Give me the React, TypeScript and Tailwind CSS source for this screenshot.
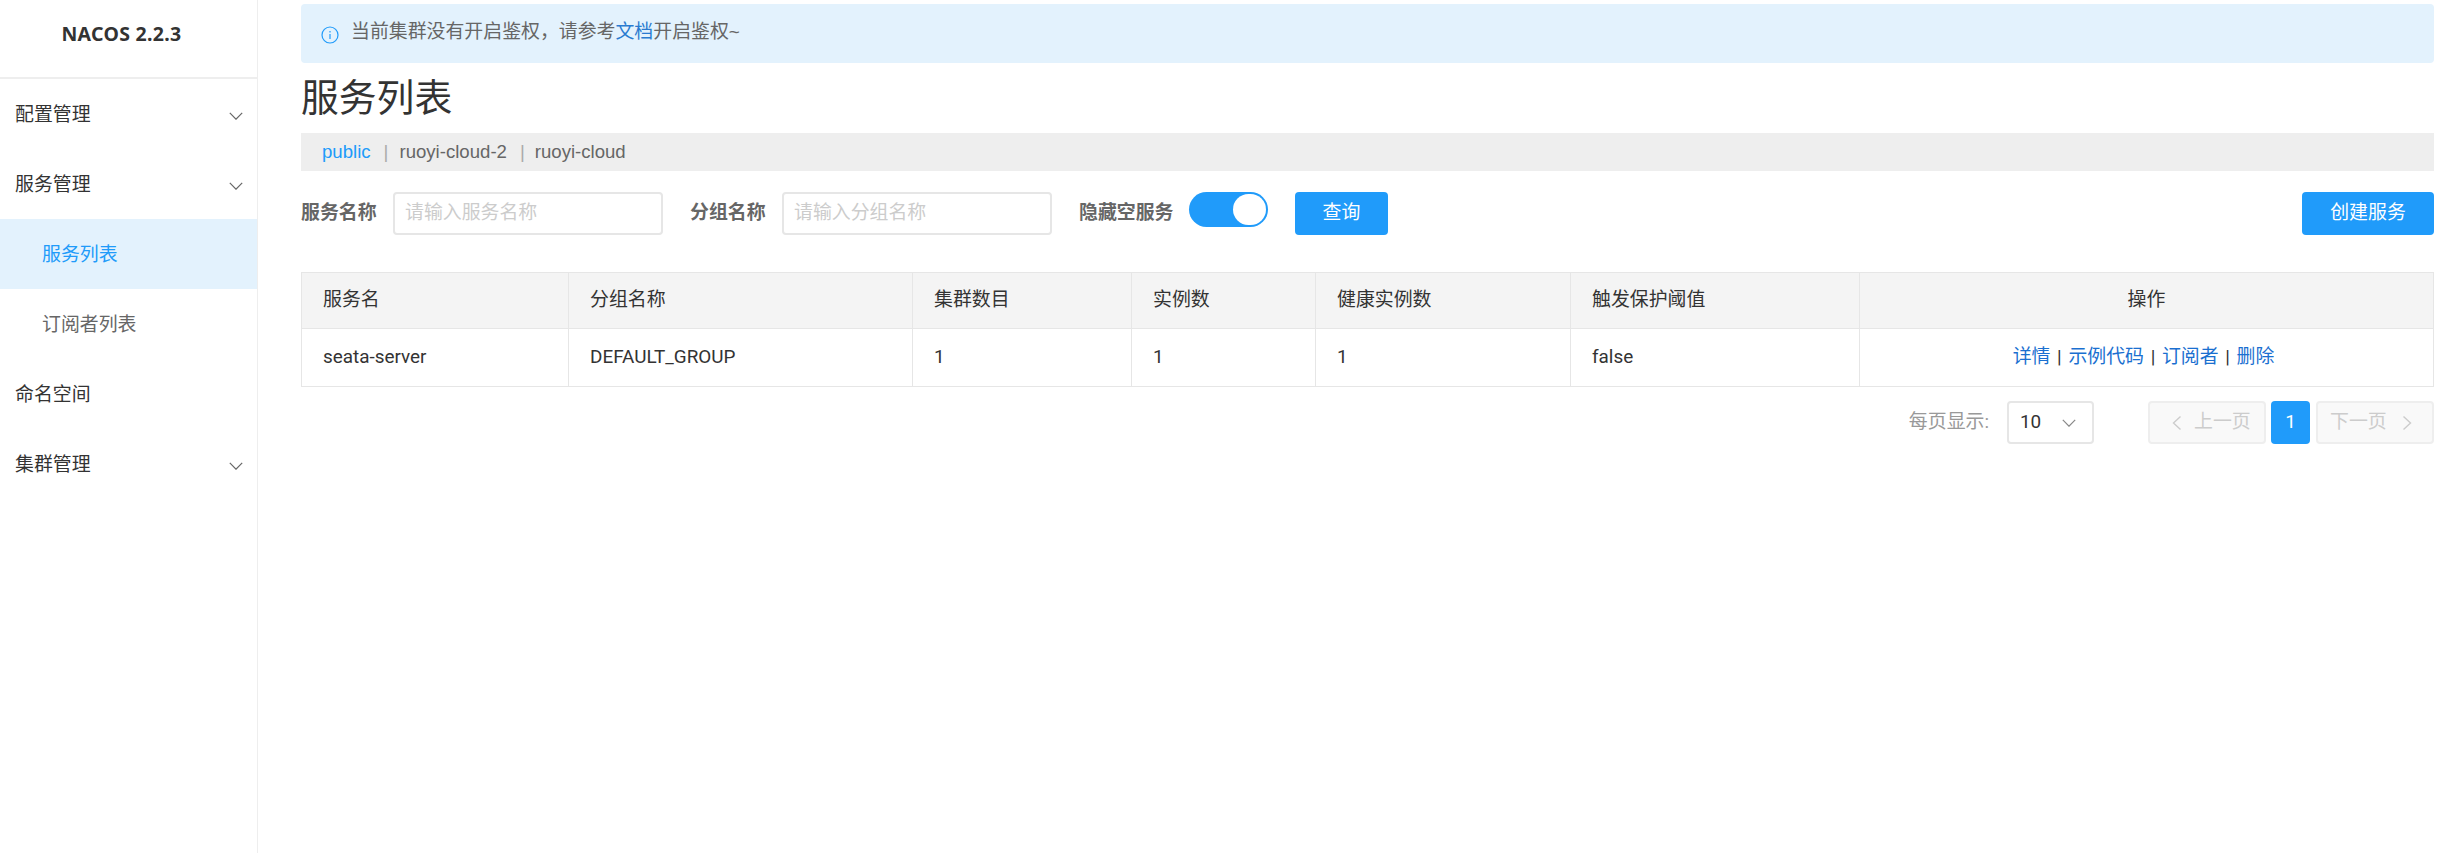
import React from "react";

const font = "font-['Liberation_Sans','Noto_Sans_CJK_SC',sans-serif]";
const roboto = "font-['Roboto','Noto_Sans_CJK_SC',sans-serif]";

function Chevron({ color = "#666666", w = 14, h = 8 }: { color?: string; w?: number; h?: number }) {
  return (
    <svg width={w} height={h} viewBox="0 0 14 8" fill="none" stroke={color} strokeWidth="1.2">
      <path d="M0.8 0.8 L7 7.2 L13.2 0.8" />
    </svg>
  );
}

function Side({ dir }: { dir: "l" | "r" }) {
  return (
    <svg width="10" height="16" viewBox="0 0 10 16" fill="none" stroke="#cccccc" strokeWidth="1.4">
      <path d={dir === "l" ? "M8.5 1.5 L1.5 8 L8.5 14.5" : "M1.5 1.5 L8.5 8 L1.5 14.5"} />
    </svg>
  );
}

function MenuItem({ label, chevron, active, sub }: { label: string; chevron?: boolean; active?: boolean; sub?: boolean }) {
  return (
    <div
      className={`h-[70px] flex items-center justify-between pr-[14px] pt-[3px] text-[18.9px] ${sub ? "pl-[42px]" : "pl-[15px]"} ${
        active ? "bg-[#e3f2fd] text-[#209bfa]" : sub ? "text-[#666666]" : "text-[#333333]"
      }`}
    >
      <span>{label}</span>
      {chevron && <Chevron />}
    </div>
  );
}

const cell = "border border-[#e6e6e6] text-[18.9px] text-[#333333]";
const th = `h-[56px] px-[21px] font-normal ${cell}`;
const td = `h-[58px] ${cell}`;

function Field({ label, placeholder }: { label: string; placeholder: string }) {
  return (
    <div className="flex items-center gap-[16px]">
      <span className="w-[76px] whitespace-nowrap text-[18.9px] font-bold text-[#666666]">{label}</span>
      <div className="w-[270px] h-[43px] border-2 border-[#e6e6e6] rounded-[4px] flex items-center px-[10px] text-[18.9px] text-[#cccccc]">
        {placeholder}
      </div>
    </div>
  );
}

export default function App() {
  return (
    <div className={`${font} flex w-[2437px] h-[853px] bg-white overflow-hidden`}>
      <aside className="w-[258px] shrink-0 border-r border-[#eeeeee] h-full">
        <div className="h-[79px] border-b-2 border-[#eeeeee] flex items-center justify-center pb-[10px] pr-[14px] font-['Noto_Sans',sans-serif] text-[19.5px] font-bold text-[#333333] tracking-[0.3px]">
          NACOS 2.2.3
        </div>
        <MenuItem label="配置管理" chevron />
        <MenuItem label="服务管理" chevron />
        <MenuItem label="服务列表" sub active />
        <MenuItem label="订阅者列表" sub />
        <MenuItem label="命名空间" />
        <MenuItem label="集群管理" chevron />
      </aside>
      <main className="flex-1 pl-[43px] pr-[3px] pt-[4px] min-w-0">
        <div className="h-[59px] bg-[#e3f2fd] rounded-[4px] flex items-center pl-[20px] pb-[2px] text-[18.9px] text-[#666666]">
          <svg width="18" height="18" viewBox="0 0 18 18" fill="none" stroke="#209bfa" strokeWidth="1.2" className="mr-[12px] mt-[4px]">
            <circle cx="9" cy="9" r="8" />
            <path d="M9 5v1.5M9 8v5" />
          </svg>
          <span>
            当前集群没有开启鉴权，请参考<span className="text-[#2a7bd0]">文档</span>开启鉴权~
          </span>
        </div>
        <h1 className="h-[70px] flex items-center text-[37.8px] font-normal text-[#333333]">服务列表</h1>
        <div className="h-[38px] bg-[#eeeeee] flex items-center pl-[21px] text-[18.6px] text-[#666666]">
          <span className="text-[#209bfa]">public</span>
          <span className="ml-[13px] mr-[11px] text-[#aaaaaa]">|</span>
          <span>ruoyi-cloud-2</span>
          <span className="ml-[13px] mr-[10px] text-[#aaaaaa]">|</span>
          <span>ruoyi-cloud</span>
        </div>
        <div className="flex items-start justify-between mt-[21px]">
          <div className="flex items-start">
            <div className="mr-[27px]">
              <Field label="服务名称" placeholder="请输入服务名称" />
            </div>
            <div className="mr-[27px]">
              <Field label="分组名称" placeholder="请输入分组名称" />
            </div>
            <span className="w-[95px] whitespace-nowrap h-[43px] flex items-center text-[18.9px] font-bold text-[#666666]">隐藏空服务</span>
            <div className="ml-[15px] w-[79px] h-[35px] rounded-full bg-[#209bfa] flex items-center justify-end pr-[2px]">
              <div className="w-[33px] h-[31px] rounded-full bg-white" />
            </div>
            <button className="ml-[27px] w-[93px] h-[43px] bg-[#209bfa] text-white rounded-[4px] text-[18.9px]">查询</button>
          </div>
          <button className="w-[132px] h-[43px] bg-[#209bfa] text-white rounded-[4px] text-[18.9px]">创建服务</button>
        </div>
        <table className={`${roboto} w-full mt-[37px] border-collapse table-fixed text-left`}>
          <colgroup>
            <col className="w-[267px]" />
            <col className="w-[344px]" />
            <col className="w-[219px]" />
            <col className="w-[184px]" />
            <col className="w-[255px]" />
            <col className="w-[289px]" />
            <col />
          </colgroup>
          <thead>
            <tr className="bg-[#f4f4f4]">
              <th className={`${th} text-left`}>服务名</th>
              <th className={`${th} text-left`}>分组名称</th>
              <th className={`${th} text-left`}>集群数目</th>
              <th className={`${th} text-left`}>实例数</th>
              <th className={`${th} text-left`}>健康实例数</th>
              <th className={`${th} text-left`}>触发保护阈值</th>
              <th className={`${th} text-center`}>操作</th>
            </tr>
          </thead>
          <tbody>
            <tr>
              <td className={`${td} px-[21px]`}>seata-server</td>
              <td className={`${td} px-[21px]`}>DEFAULT_GROUP</td>
              <td className={`${td} px-[21px]`}>1</td>
              <td className={`${td} px-[21px]`}>1</td>
              <td className={`${td} px-[21px]`}>1</td>
              <td className={`${td} px-[21px]`}>false</td>
              <td className={`${td} pl-[21px] pr-[27px] text-center [word-spacing:2px]`}>
                <span className="text-[#1a6fd0]">详情</span> | <span className="text-[#1a6fd0]">示例代码</span> | <span className="text-[#1a6fd0]">订阅者</span> | <span className="text-[#1a6fd0]">删除</span>
              </td>
            </tr>
          </tbody>
        </table>
        <div className={`${roboto} flex items-center justify-end mt-[14px] text-[18.9px]`}>
          <span className="text-[#999999] mr-[18px]">每页显示:</span>
          <div className="w-[87px] h-[43px] border-2 border-[#e6e6e6] rounded-[4px] flex items-center justify-between pl-[11px] pr-[16px] text-[#333333]">
            <span>10</span>
            <Chevron color="#888888" />
          </div>
          <div className="ml-[54px] w-[118px] h-[43px] bg-[#f9f9f9] border-2 border-[#eeeeee] rounded-[4px] flex items-center pl-[22px] gap-[12px] text-[#cccccc]">
            <Side dir="l" />
            <span>上一页</span>
          </div>
          <div className="ml-[5px] w-[39px] h-[43px] bg-[#209bfa] text-white rounded-[4px] flex items-center justify-center">1</div>
          <div className="ml-[6px] w-[118px] h-[43px] bg-[#f9f9f9] border-2 border-[#eeeeee] rounded-[4px] flex items-center pl-[12px] gap-[15px] text-[#cccccc]">
            <span>下一页</span>
            <Side dir="r" />
          </div>
        </div>
      </main>
    </div>
  );
}
